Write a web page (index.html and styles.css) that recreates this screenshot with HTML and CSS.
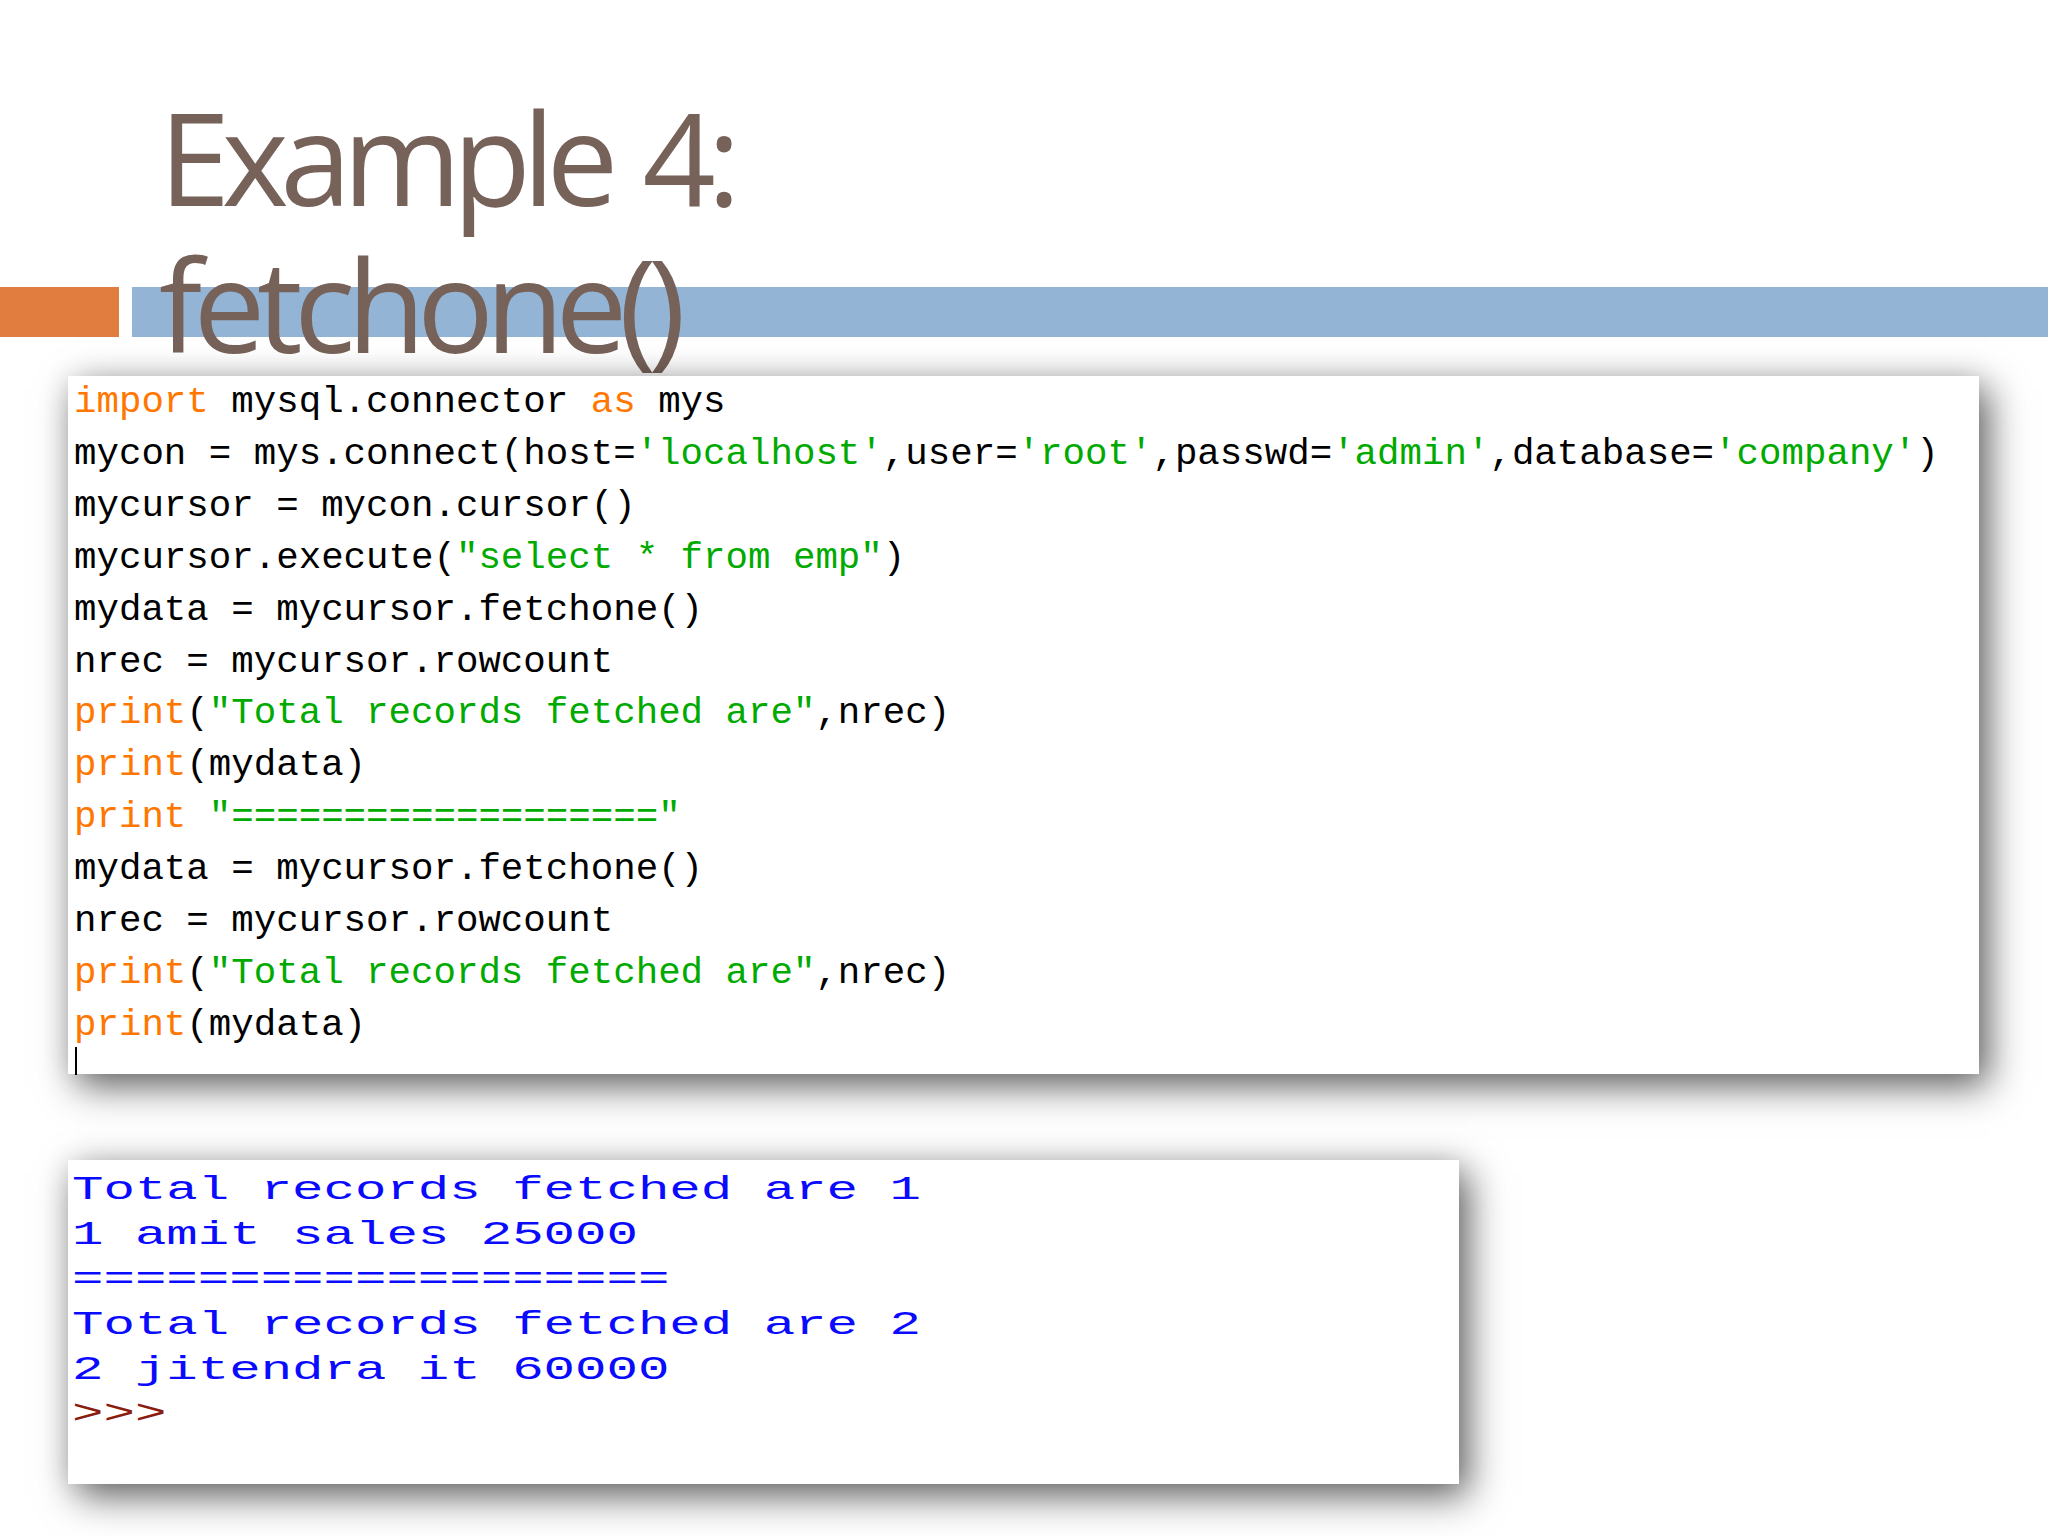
FILE: index.html
```html
<!DOCTYPE html>
<html lang="en">
<head>
<meta charset="utf-8">
<title>Example 4: fetchone()</title>
<link rel="stylesheet" href="styles.css">
</head>
<body>
<div class="slide">
  <header class="slide-head">
    <div class="band"><span class="band-accent"></span><span class="band-bar"></span></div>
    <h1 class="title">Example 4:<br>fetchone()</h1>
  </header>

  <section class="code-box">
    <pre class="code"><span class="kw">import</span> mysql.connector <span class="kw">as</span> mys
mycon = mys.connect(host=<span class="str">'localhost'</span>,user=<span class="str">'root'</span>,passwd=<span class="str">'admin'</span>,database=<span class="str">'company'</span>)
mycursor = mycon.cursor()
mycursor.execute(<span class="str">"select * from emp"</span>)
mydata = mycursor.fetchone()
nrec = mycursor.rowcount
<span class="kw">print</span>(<span class="str">"Total records fetched are"</span>,nrec)
<span class="kw">print</span>(mydata)
<span class="kw">print</span> <span class="str">"==================="</span>
mydata = mycursor.fetchone()
nrec = mycursor.rowcount
<span class="kw">print</span>(<span class="str">"Total records fetched are"</span>,nrec)
<span class="kw">print</span>(mydata)</pre>
    <div class="caret"></div>
  </section>

  <section class="output-box">
    <pre class="output">Total records fetched are 1
1 amit sales 25000
===================
Total records fetched are 2
2 jitendra it 60000
<span class="prompt">&gt;&gt;&gt;</span></pre>
  </section>
</div>
</body>
</html>
```

FILE: styles.css
```css
html, body {
  margin: 0;
  padding: 0;
  background: #ffffff;
}

.slide {
  width: 2048px;
  height: 1536px;
  overflow: hidden;
  display: flex;
  flex-direction: column;
  background: #ffffff;
}

.slide-head {
  position: relative;
  height: 376px;
  flex: none;
}

.band {
  position: absolute;
  left: 0;
  right: 0;
  top: 287px;
  height: 50px;
  display: flex;
  gap: 13px;
}

.band-accent {
  width: 119px;
  background: #e07d3f;
}

.band-bar {
  flex: 1;
  background: #93b4d4;
}

.title {
  position: relative;
  margin: 0;
  padding: 83px 0 0 159px;
  font-family: "Open Sans", "Noto Sans", sans-serif;
  font-weight: 400;
  font-size: 128px;
  line-height: 147px;
  letter-spacing: -8.5px;
  word-spacing: 8px;
  color: #77625a;
}

.code-box {
  flex: none;
  margin-left: 68px;
  width: 1911px;
  height: 698px;
  box-sizing: border-box;
  padding: 1px 0 0 6px;
  background: #ffffff;
  position: relative;
  box-shadow: 9px 12px 36px rgba(0, 0, 0, 0.62), 0 0 26px rgba(0, 0, 0, 0.08);
}

.code {
  margin: 0;
  font-family: "Liberation Mono", "Courier New", monospace;
  font-size: 37.45px;
  line-height: 51.9px;
  color: #000000;
  white-space: pre;
}

.kw { color: #ff7700; }
.str { color: #00aa00; }

.caret {
  width: 2px;
  height: 28px;
  margin: -5px 0 0 1px;
  background: #000000;
}

.output-box {
  flex: none;
  margin-top: 86px;
  margin-left: 68px;
  width: 1391px;
  height: 324px;
  box-sizing: border-box;
  padding: 8px 0 0 4px;
  background: #ffffff;
  overflow: hidden;
  box-shadow: 9px 12px 36px rgba(0, 0, 0, 0.62), 0 0 26px rgba(0, 0, 0, 0.08);
}

.output {
  margin: 0;
  font-family: "Liberation Mono", "Courier New", monospace;
  font-size: 52.4px;
  line-height: 68.9px;
  color: #0a0aff;
  white-space: pre;
  transform: scaleY(0.65);
  transform-origin: 0 0;
}

.prompt { color: #8a1c10; }
```
